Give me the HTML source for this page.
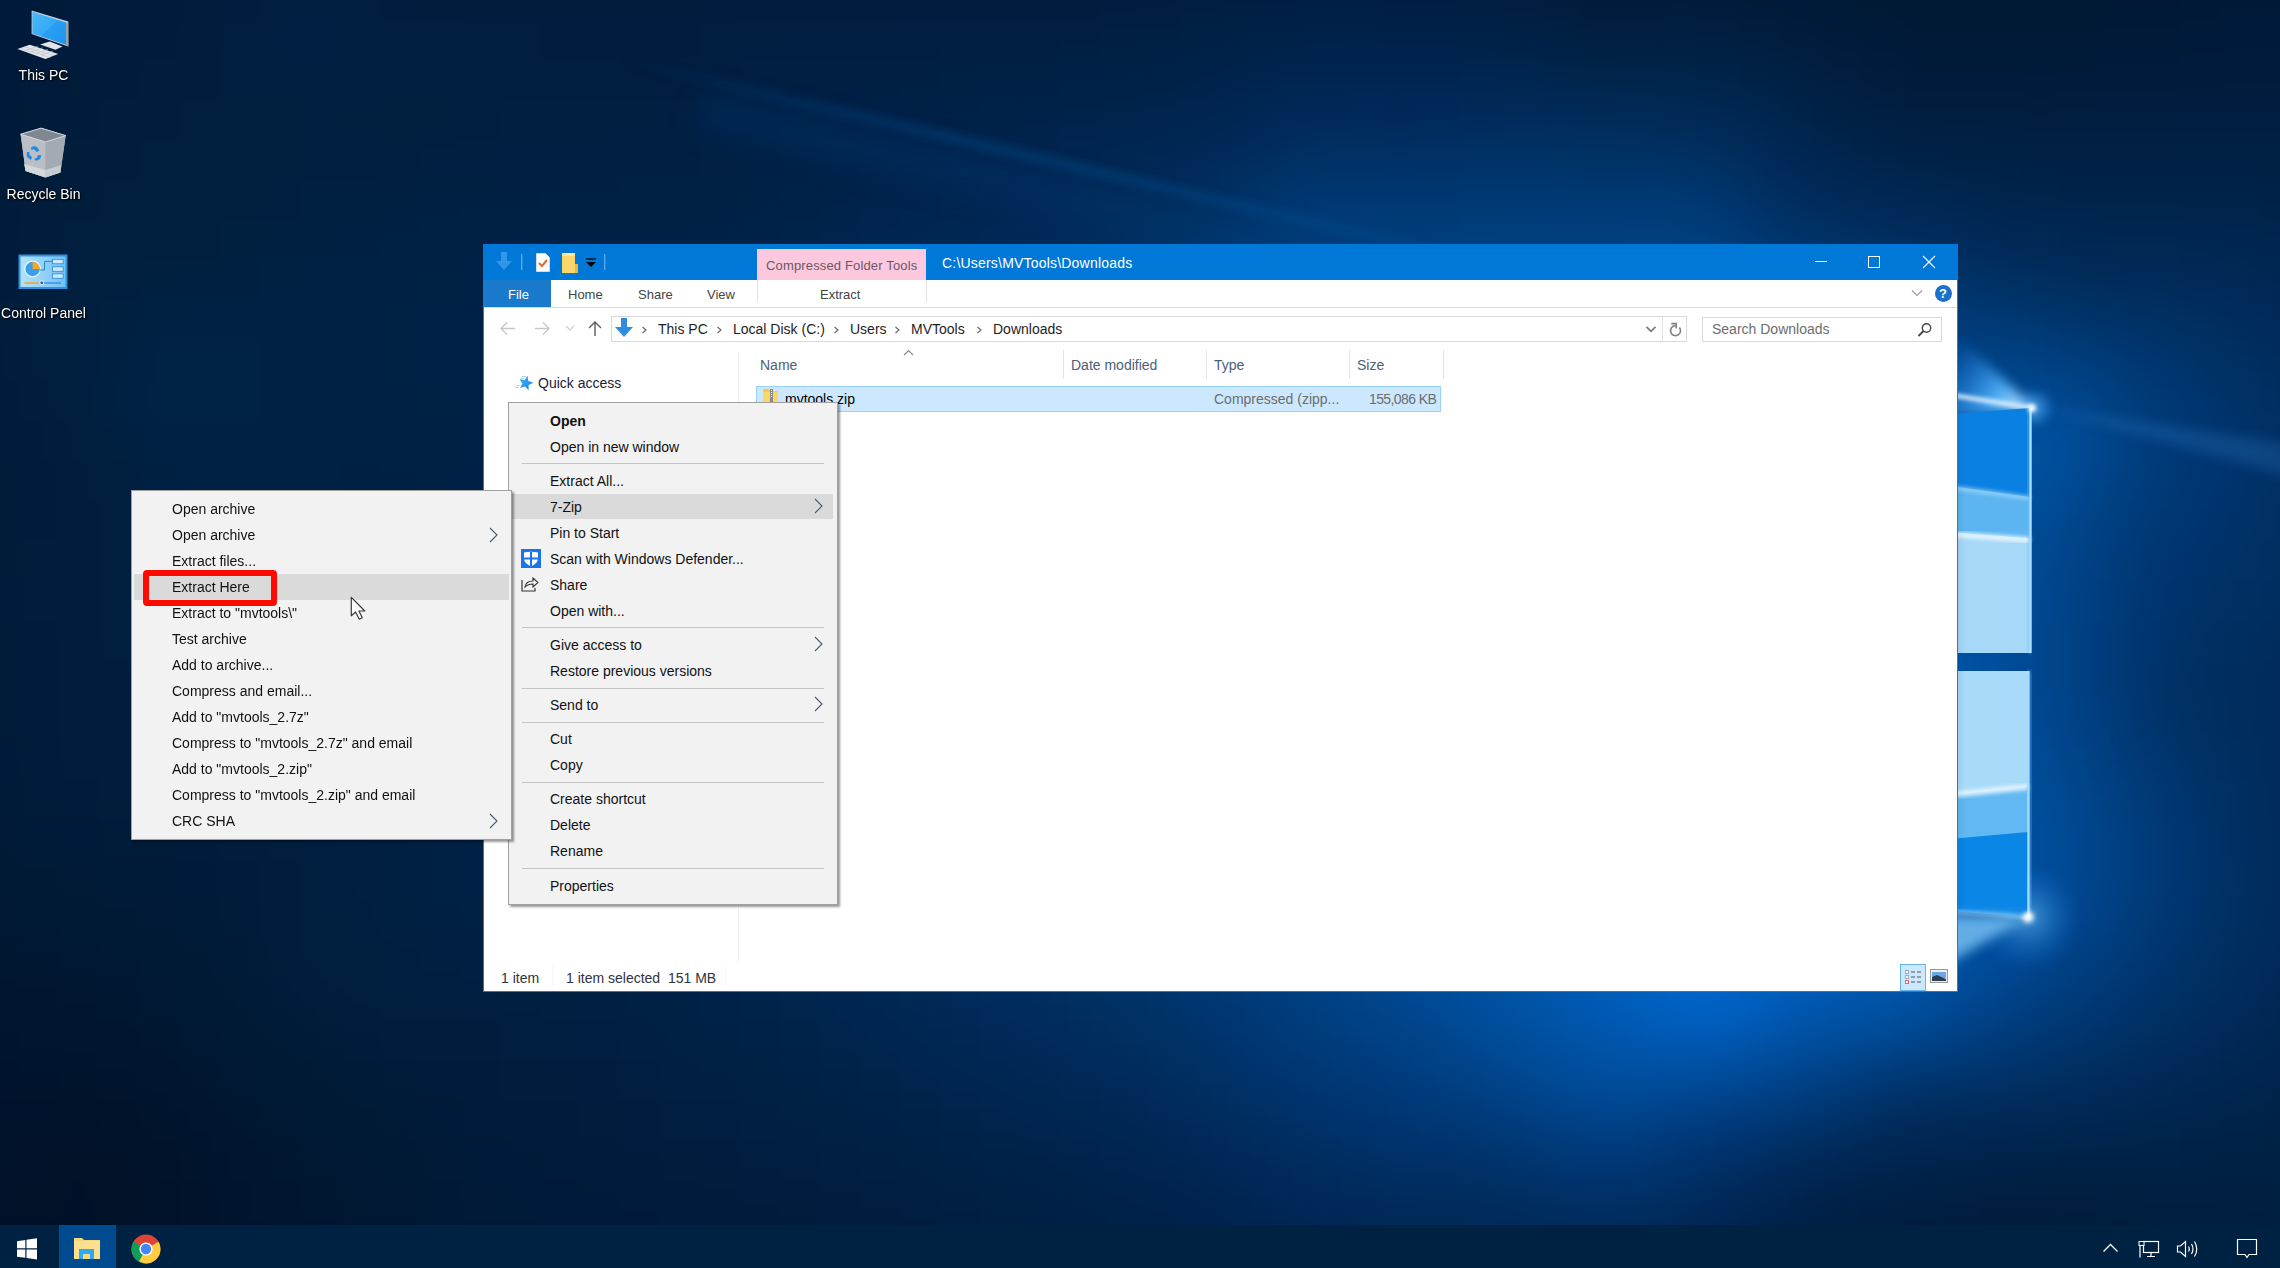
<!DOCTYPE html>
<html><head><meta charset="utf-8">
<style>
*{margin:0;padding:0;box-sizing:border-box}
html,body{width:2280px;height:1268px;overflow:hidden}
body{position:relative;font-family:"Liberation Sans",sans-serif;background:#001f40}
div,span,svg{position:absolute}
.t{white-space:nowrap;font-size:14px;line-height:14px;color:#111}
.s13{font-size:13px;line-height:13px}
#bg{left:0;top:0;width:2280px;height:1268px;overflow:hidden}
.ico-lbl{color:#fff;text-shadow:0 0 2px #000,1px 1px 2px #000;text-align:center}
.menu{background:#f2f2f2;border:1px solid #a0a0a0;box-shadow:2px 2px 2px rgba(0,0,0,.4)}
.sep{height:1px;background:#c5c5c5}
.chev{width:6px;height:6px}
</style></head><body>
<div id="bg">
<div style="left:-60px;top:-60px;width:2400px;height:1400px;filter:blur(24px)"><div style="left:60px;top:60px;width:2280px;height:1268px">
<div style="left:-120px;top:-140px;width:2520px;height:40px;background:linear-gradient(90deg,#001836 0px,#001837 40px,#001837 80px,#001938 120px,#001939 160px,#001939 200px,#001a3a 240px,#001a3b 280px,#001b3b 320px,#001b3c 360px,#001b3c 400px,#001b3c 440px,#001b3c 480px,#001b3c 520px,#001b3b 560px,#001b3b 600px,#001b3b 640px,#001b3b 680px,#001b3a 720px,#001b3a 760px,#001b3a 800px,#001a3a 840px,#001a3a 880px,#001a39 920px,#001a39 960px,#001a39 1000px,#001a39 1040px,#001939 1080px,#001938 1120px,#001938 1160px,#001938 1200px,#001938 1240px,#001938 1280px,#001938 1320px,#001938 1360px,#001938 1400px,#001838 1440px,#001837 1480px,#001836 1520px,#001835 1560px,#001734 1600px,#001733 1640px,#001632 1680px,#001631 1720px,#001630 1760px,#00162f 1800px,#00152f 1840px,#00152e 1880px,#00152e 1920px,#00152d 1960px,#00142d 2000px,#00142d 2040px,#00142d 2080px,#00142d 2120px,#00142d 2160px,#00142d 2200px,#00152e 2240px,#00152e 2280px,#00152f 2320px,#00152f 2360px,#001630 2400px,#001630 2440px,#001630 2480px,#001630 2520px)"></div>
<div style="left:-120px;top:-100px;width:2520px;height:40px;background:linear-gradient(90deg,#001837 0px,#001837 40px,#001938 80px,#001939 120px,#001939 160px,#001a3a 200px,#001a3b 240px,#001b3c 280px,#001b3c 320px,#001c3d 360px,#001c3d 400px,#001c3d 440px,#001c3d 480px,#001c3d 520px,#001c3d 560px,#001c3c 600px,#001c3c 640px,#001c3c 680px,#001b3c 720px,#001b3b 760px,#001b3b 800px,#001b3b 840px,#001b3b 880px,#001b3b 920px,#001b3b 960px,#001b3b 1000px,#001b3b 1040px,#001a3b 1080px,#001a3b 1120px,#001a3a 1160px,#001a3a 1200px,#001a3a 1240px,#001a3b 1280px,#001a3b 1320px,#001a3b 1360px,#001a3b 1400px,#001a3b 1440px,#001a3b 1480px,#001a3a 1520px,#001939 1560px,#001938 1600px,#001936 1640px,#001835 1680px,#001834 1720px,#001733 1760px,#001732 1800px,#001732 1840px,#001731 1880px,#001631 1920px,#001630 1960px,#00162f 2000px,#00152f 2040px,#00152f 2080px,#00152f 2120px,#00152f 2160px,#00162f 2200px,#001630 2240px,#001630 2280px,#001631 2320px,#001632 2360px,#001732 2400px,#001732 2440px,#001732 2480px,#001732 2520px)"></div>
<div style="left:-120px;top:-60px;width:2520px;height:40px;background:linear-gradient(90deg,#001837 0px,#001938 40px,#001938 80px,#001939 120px,#001a3a 160px,#001a3b 200px,#001b3b 240px,#001b3c 280px,#001c3d 320px,#001c3e 360px,#001d3f 400px,#001d3f 440px,#001d3e 480px,#001d3e 520px,#001d3d 560px,#001c3d 600px,#001c3d 640px,#001c3d 680px,#001c3d 720px,#001c3d 760px,#001c3d 800px,#001c3d 840px,#001c3d 880px,#001c3d 920px,#001c3d 960px,#001c3d 1000px,#001c3d 1040px,#001c3d 1080px,#001c3d 1120px,#001b3d 1160px,#001b3d 1200px,#001b3d 1240px,#001c3d 1280px,#001c3e 1320px,#001c3f 1360px,#001c3f 1400px,#001c3f 1440px,#001c3f 1480px,#001c3f 1520px,#001c3e 1560px,#001b3c 1600px,#001b3a 1640px,#001a39 1680px,#001a37 1720px,#001936 1760px,#001936 1800px,#001936 1840px,#001935 1880px,#001834 1920px,#001833 1960px,#001732 2000px,#001731 2040px,#001731 2080px,#001731 2120px,#001731 2160px,#001732 2200px,#001732 2240px,#001733 2280px,#001733 2320px,#001834 2360px,#001835 2400px,#001835 2440px,#001835 2480px,#001835 2520px)"></div>
<div style="left:-120px;top:-20px;width:2520px;height:40px;background:linear-gradient(90deg,#001837 0px,#001938 40px,#001939 80px,#001a39 120px,#001a3a 160px,#001b3b 200px,#001b3c 240px,#001c3d 280px,#001d3e 320px,#001d3f 360px,#001e40 400px,#001e40 440px,#001e3f 480px,#001d3f 520px,#001d3e 560px,#001d3e 600px,#001d3e 640px,#001d3e 680px,#001d3e 720px,#001d3e 760px,#001d3e 800px,#001d3e 840px,#001d3e 880px,#001d3f 920px,#001d3f 960px,#001d3f 1000px,#001d3f 1040px,#001d3f 1080px,#001d3f 1120px,#001d3f 1160px,#001d3f 1200px,#001d40 1240px,#001d41 1280px,#001e42 1320px,#001e43 1360px,#001e44 1400px,#001f44 1440px,#001f44 1480px,#001e44 1520px,#001e43 1560px,#001e42 1600px,#001d40 1640px,#001d3d 1680px,#001c3b 1720px,#001c3b 1760px,#001c3b 1800px,#001c3b 1840px,#001b3a 1880px,#001a38 1920px,#001a36 1960px,#001935 2000px,#001834 2040px,#001834 2080px,#001834 2120px,#001834 2160px,#001834 2200px,#001835 2240px,#001835 2280px,#001936 2320px,#001937 2360px,#001937 2400px,#001937 2440px,#001937 2480px,#001937 2520px)"></div>
<div style="left:-120px;top:20px;width:2520px;height:40px;background:linear-gradient(90deg,#001937 0px,#001938 40px,#001a39 80px,#001a3a 120px,#001b3a 160px,#001b3b 200px,#001c3c 240px,#001c3d 280px,#001d3e 320px,#001e3f 360px,#001e41 400px,#001e41 440px,#001e40 480px,#001e3f 520px,#001e3f 560px,#001e3f 600px,#001e3f 640px,#001d3f 680px,#001d3f 720px,#001d3f 760px,#001d3f 800px,#001e40 840px,#001e40 880px,#001e41 920px,#001e41 960px,#001e41 1000px,#001e42 1040px,#001e42 1080px,#001e42 1120px,#001e42 1160px,#001e43 1200px,#001f43 1240px,#001f44 1280px,#002046 1320px,#002147 1360px,#002149 1400px,#00214a 1440px,#00214a 1480px,#00214a 1520px,#00214a 1560px,#002149 1600px,#002147 1640px,#002044 1680px,#001f40 1720px,#001f41 1760px,#002042 1800px,#001f41 1840px,#001e3f 1880px,#001d3d 1920px,#001c3b 1960px,#001b39 2000px,#001a37 2040px,#001a37 2080px,#001a37 2120px,#001a37 2160px,#001a37 2200px,#001a38 2240px,#001a38 2280px,#001a39 2320px,#001b3a 2360px,#001b3a 2400px,#001b3a 2440px,#001b3a 2480px,#001a3a 2520px)"></div>
<div style="left:-120px;top:60px;width:2520px;height:40px;background:linear-gradient(90deg,#001938 0px,#001a38 40px,#001a39 80px,#001b3a 120px,#001b3b 160px,#001c3b 200px,#001c3c 240px,#001d3d 280px,#001d3e 320px,#001e3f 360px,#001e40 400px,#001f40 440px,#001e40 480px,#001e3f 520px,#001e3f 560px,#001e3f 600px,#001e40 640px,#001e40 680px,#001e40 720px,#001e40 760px,#001e41 800px,#001e41 840px,#001f42 880px,#001f42 920px,#001f43 960px,#001f44 1000px,#001f44 1040px,#002045 1080px,#002046 1120px,#002046 1160px,#002147 1200px,#002147 1240px,#002249 1280px,#00224a 1320px,#00234d 1360px,#00254f 1400px,#002551 1440px,#002552 1480px,#002551 1520px,#002552 1560px,#002651 1600px,#002650 1640px,#00254e 1680px,#00254c 1720px,#00254c 1760px,#00244b 1800px,#00234a 1840px,#002247 1880px,#002043 1920px,#001e40 1960px,#001d3d 2000px,#001c3b 2040px,#001c3a 2080px,#001c3b 2120px,#001b3b 2160px,#001c3b 2200px,#001c3c 2240px,#001c3c 2280px,#001c3d 2320px,#001c3d 2360px,#001c3d 2400px,#001c3d 2440px,#001c3d 2480px,#001c3c 2520px)"></div>
<div style="left:-120px;top:100px;width:2520px;height:40px;background:linear-gradient(90deg,#001938 0px,#001a39 40px,#001a39 80px,#001b3a 120px,#001c3b 160px,#001c3c 200px,#001d3c 240px,#001d3d 280px,#001e3d 320px,#001e3e 360px,#001f3f 400px,#001f40 440px,#001f3f 480px,#001f3f 520px,#001f3f 560px,#001f40 600px,#001f41 640px,#001f41 680px,#001f41 720px,#001f41 760px,#001f42 800px,#001f43 840px,#001f43 880px,#002044 920px,#002045 960px,#002046 1000px,#002147 1040px,#002148 1080px,#002249 1120px,#00224a 1160px,#00234b 1200px,#00244c 1240px,#00244e 1280px,#00254f 1320px,#002753 1360px,#002958 1400px,#002a5a 1440px,#002a5b 1480px,#00295a 1520px,#002a5b 1560px,#002b5c 1600px,#002c5b 1640px,#002c5a 1680px,#002c59 1720px,#002b58 1760px,#002a57 1800px,#002954 1840px,#002650 1880px,#00234b 1920px,#002146 1960px,#001f42 2000px,#001e40 2040px,#001e40 2080px,#001e3f 2120px,#001e3f 2160px,#001e40 2200px,#001e40 2240px,#001e40 2280px,#001e41 2320px,#001e41 2360px,#001e41 2400px,#001e40 2440px,#001e40 2480px,#001d3f 2520px)"></div>
<div style="left:-120px;top:140px;width:2520px;height:40px;background:linear-gradient(90deg,#001a38 0px,#001a39 40px,#001b3a 80px,#001b3a 120px,#001c3b 160px,#001d3c 200px,#001d3c 240px,#001e3d 280px,#001e3d 320px,#001f3e 360px,#001f3f 400px,#001f40 440px,#001f40 480px,#001f40 520px,#001f41 560px,#001f41 600px,#001f42 640px,#001f42 680px,#001f42 720px,#001f43 760px,#001f43 800px,#002044 840px,#002045 880px,#002146 920px,#002148 960px,#002249 1000px,#00224a 1040px,#00234c 1080px,#00244d 1120px,#00254f 1160px,#002651 1200px,#002752 1240px,#002854 1280px,#002956 1320px,#002c5c 1360px,#002f62 1400px,#003166 1440px,#003166 1480px,#003066 1520px,#003167 1560px,#003267 1600px,#003267 1640px,#003367 1680px,#003266 1720px,#003266 1760px,#003164 1800px,#002f60 1840px,#002b5a 1880px,#002753 1920px,#00254e 1960px,#00234a 2000px,#002248 2040px,#002146 2080px,#002145 2120px,#002045 2160px,#002045 2200px,#002045 2240px,#002045 2280px,#002045 2320px,#002045 2360px,#002045 2400px,#002044 2440px,#001f43 2480px,#001f42 2520px)"></div>
<div style="left:-120px;top:180px;width:2520px;height:40px;background:linear-gradient(90deg,#001a38 0px,#001b39 40px,#001b3a 80px,#001c3b 120px,#001d3b 160px,#001d3c 200px,#001e3d 240px,#001e3d 280px,#001f3d 320px,#001f3e 360px,#001f40 400px,#002041 440px,#002041 480px,#002042 520px,#002043 560px,#002043 600px,#002043 640px,#002044 680px,#002044 720px,#002044 760px,#002044 800px,#002045 840px,#002147 880px,#002248 920px,#00224a 960px,#00234c 1000px,#00244e 1040px,#002550 1080px,#002652 1120px,#002754 1160px,#002956 1200px,#002a59 1240px,#002c5c 1280px,#002f61 1320px,#003267 1360px,#00376f 1400px,#003873 1440px,#003873 1480px,#003872 1520px,#003872 1560px,#003973 1600px,#003973 1640px,#003973 1680px,#003973 1720px,#003973 1760px,#003973 1800px,#00366e 1840px,#003165 1880px,#002b5c 1920px,#002a58 1960px,#002855 2000px,#002752 2040px,#00264f 2080px,#00244d 2120px,#00244b 2160px,#00234b 2200px,#00234a 2240px,#00234a 2280px,#00234a 2320px,#00234a 2360px,#002249 2400px,#002248 2440px,#002147 2480px,#002045 2520px)"></div>
<div style="left:-120px;top:220px;width:2520px;height:40px;background:linear-gradient(90deg,#001a38 0px,#001b39 40px,#001b3a 80px,#001c3b 120px,#001d3c 160px,#001e3d 200px,#001e3e 240px,#001f3e 280px,#001f3f 320px,#002040 360px,#002041 400px,#002042 440px,#002043 480px,#002044 520px,#002144 560px,#002145 600px,#002045 640px,#002045 680px,#002045 720px,#002145 760px,#002146 800px,#002147 840px,#002249 880px,#00234b 920px,#00244d 960px,#00254f 1000px,#002651 1040px,#002753 1080px,#002856 1120px,#002a59 1160px,#002c5c 1200px,#002e60 1240px,#003164 1280px,#00346a 1320px,#003871 1360px,#003d7a 1400px,#003f7e 1440px,#003e7d 1480px,#003e7c 1520px,#003e7d 1560px,#003f7d 1600px,#003f7e 1640px,#003f7e 1680px,#003f7e 1720px,#00407f 1760px,#004080 1800px,#003d7c 1840px,#003872 1880px,#00336a 1920px,#003065 1960px,#002f61 2000px,#002d5e 2040px,#002b5a 2080px,#002855 2120px,#002854 2160px,#002752 2200px,#002751 2240px,#002751 2280px,#002650 2320px,#00264f 2360px,#00254e 2400px,#00244c 2440px,#00234b 2480px,#002249 2520px)"></div>
<div style="left:-120px;top:260px;width:2520px;height:40px;background:linear-gradient(90deg,#001a38 0px,#001b39 40px,#001c3a 80px,#001c3b 120px,#001d3d 160px,#001e3e 200px,#001f3f 240px,#002040 280px,#002041 320px,#002041 360px,#002142 400px,#002143 440px,#002144 480px,#002145 520px,#002146 560px,#002147 600px,#002146 640px,#002146 680px,#002146 720px,#002147 760px,#002248 800px,#002249 840px,#00234b 880px,#00244d 920px,#00254f 960px,#002652 1000px,#002854 1040px,#002957 1080px,#002b5a 1120px,#002c5e 1160px,#002f61 1200px,#003166 1240px,#00346b 1280px,#003871 1320px,#003c78 1360px,#00407f 1400px,#004283 1440px,#004284 1480px,#004284 1520px,#004285 1560px,#004386 1600px,#004386 1640px,#004487 1680px,#004487 1720px,#004487 1760px,#004487 1800px,#004284 1840px,#003e7d 1880px,#003a77 1920px,#003772 1960px,#00356e 2000px,#00346b 2040px,#003267 2080px,#003063 2120px,#002e5f 2160px,#002c5a 2200px,#002b59 2240px,#002b59 2280px,#002a57 2320px,#002956 2360px,#002753 2400px,#002651 2440px,#00254e 2480px,#00234c 2520px)"></div>
<div style="left:-120px;top:300px;width:2520px;height:40px;background:linear-gradient(90deg,#001a38 0px,#001b39 40px,#001c3a 80px,#001d3b 120px,#001e3d 160px,#001f3f 200px,#002041 240px,#002142 280px,#002143 320px,#002143 360px,#002144 400px,#002144 440px,#002145 480px,#002146 520px,#002147 560px,#002147 600px,#002147 640px,#002147 680px,#002248 720px,#002248 760px,#002249 800px,#00234b 840px,#00244d 880px,#00254f 920px,#002652 960px,#002854 1000px,#002957 1040px,#002b5a 1080px,#002d5e 1120px,#002f62 1160px,#003166 1200px,#00346b 1240px,#003770 1280px,#003b76 1320px,#003e7d 1360px,#004182 1400px,#004486 1440px,#004589 1480px,#00458a 1520px,#00468b 1560px,#00478c 1600px,#00478d 1640px,#00488e 1680px,#00488f 1720px,#00488f 1760px,#00478e 1800px,#00468b 1840px,#004387 1880px,#004083 1920px,#003e7f 1960px,#003d7c 2000px,#003b79 2040px,#003a76 2080px,#003973 2120px,#00376f 2160px,#00346a 2200px,#003266 2240px,#003063 2280px,#002e5f 2320px,#002c5c 2360px,#002a59 2400px,#002855 2440px,#002652 2480px,#00254f 2520px)"></div>
<div style="left:-120px;top:340px;width:2520px;height:40px;background:linear-gradient(90deg,#001a38 0px,#001b39 40px,#001c3a 80px,#001c3b 120px,#001e3d 160px,#001f3f 200px,#002042 240px,#002244 280px,#002245 320px,#002244 360px,#002144 400px,#002145 440px,#002145 480px,#002146 520px,#002147 560px,#002147 600px,#002247 640px,#002248 680px,#002249 720px,#00234a 760px,#00234b 800px,#00244d 840px,#00254f 880px,#002651 920px,#002854 960px,#002957 1000px,#002b5a 1040px,#002d5e 1080px,#002f62 1120px,#003166 1160px,#00346a 1200px,#00366f 1240px,#003a75 1280px,#003d7a 1320px,#004080 1360px,#004385 1400px,#00458a 1440px,#00478d 1480px,#00488f 1520px,#004991 1560px,#004a92 1600px,#004a93 1640px,#004b94 1680px,#004b95 1720px,#004b95 1760px,#004b94 1800px,#004992 1840px,#004890 1880px,#00468d 1920px,#00448a 1960px,#004388 2000px,#004387 2040px,#004286 2080px,#004285 2120px,#004082 2160px,#003d7c 2200px,#003974 2240px,#00356d 2280px,#003267 2320px,#002f62 2360px,#002c5e 2400px,#002a59 2440px,#002855 2480px,#002652 2520px)"></div>
<div style="left:-120px;top:380px;width:2520px;height:40px;background:linear-gradient(90deg,#001a37 0px,#001b38 40px,#001b39 80px,#001c3a 120px,#001d3c 160px,#001f3f 200px,#002143 240px,#002246 280px,#002245 320px,#002245 360px,#002145 400px,#002145 440px,#002145 480px,#002145 520px,#002146 560px,#002147 600px,#002247 640px,#002248 680px,#002349 720px,#00234a 760px,#00244c 800px,#00254e 840px,#002650 880px,#002753 920px,#002956 960px,#002a59 1000px,#002c5d 1040px,#002e60 1080px,#003065 1120px,#003369 1160px,#00366e 1200px,#003873 1240px,#003b78 1280px,#003e7e 1320px,#004183 1360px,#004488 1400px,#00478c 1440px,#004890 1480px,#004a93 1520px,#004b95 1560px,#004c97 1600px,#004d99 1640px,#004e9a 1680px,#004e9b 1720px,#004e9b 1760px,#004e9b 1800px,#004d9a 1840px,#004c98 1880px,#004b96 1920px,#004a94 1960px,#004993 2000px,#004993 2040px,#004a94 2080px,#004b95 2120px,#004b95 2160px,#00468c 2200px,#003f7f 2240px,#003975 2280px,#00356d 2320px,#003167 2360px,#002e62 2400px,#002c5d 2440px,#002958 2480px,#002754 2520px)"></div>
<div style="left:-120px;top:420px;width:2520px;height:40px;background:linear-gradient(90deg,#001a37 0px,#001b38 40px,#001b39 80px,#001c3a 120px,#001c3a 160px,#001e3d 200px,#002041 240px,#002144 280px,#002144 320px,#002144 360px,#002144 400px,#002144 440px,#002144 480px,#002145 520px,#002145 560px,#002146 600px,#002247 640px,#002248 680px,#002349 720px,#00244b 760px,#00254d 800px,#00264f 840px,#002752 880px,#002855 920px,#002a58 960px,#002c5b 1000px,#002e5f 1040px,#003063 1080px,#003267 1120px,#00346c 1160px,#003771 1200px,#003a76 1240px,#003d7b 1280px,#004080 1320px,#004386 1360px,#00458b 1400px,#00488f 1440px,#004a93 1480px,#004c96 1520px,#004d99 1560px,#004f9c 1600px,#00509e 1640px,#00509f 1680px,#0051a0 1720px,#0051a1 1760px,#0051a1 1800px,#0051a0 1840px,#00509f 1880px,#004f9e 1920px,#004e9d 1960px,#004e9c 2000px,#004e9c 2040px,#004f9d 2080px,#0051a0 2120px,#0053a5 2160px,#004b97 2200px,#004285 2240px,#003b79 2280px,#003671 2320px,#00336b 2360px,#003065 2400px,#002d5f 2440px,#002a5a 2480px,#002855 2520px)"></div>
<div style="left:-120px;top:460px;width:2520px;height:40px;background:linear-gradient(90deg,#001a37 0px,#001b38 40px,#001b38 80px,#001c39 120px,#001c3a 160px,#001d3c 200px,#001f3f 240px,#002042 280px,#002143 320px,#002143 360px,#002143 400px,#002143 440px,#002043 480px,#002043 520px,#002044 560px,#002145 600px,#002146 640px,#002248 680px,#00234a 720px,#00244c 760px,#00254e 800px,#002650 840px,#002853 880px,#002956 920px,#002b59 960px,#002d5d 1000px,#002f61 1040px,#003165 1080px,#003369 1120px,#00366e 1160px,#003873 1200px,#003b78 1240px,#003e7d 1280px,#004183 1320px,#004488 1360px,#00478d 1400px,#004991 1440px,#004b96 1480px,#004d99 1520px,#004f9d 1560px,#0051a0 1600px,#0052a2 1640px,#0053a4 1680px,#0054a5 1720px,#0054a6 1760px,#0054a6 1800px,#0054a6 1840px,#0053a5 1880px,#0053a4 1920px,#0052a3 1960px,#0051a2 2000px,#0051a2 2040px,#0051a2 2080px,#0051a2 2120px,#00509e 2160px,#004991 2200px,#004082 2240px,#003a78 2280px,#003671 2320px,#00336b 2360px,#003065 2400px,#002d60 2440px,#002b5b 2480px,#002856 2520px)"></div>
<div style="left:-120px;top:500px;width:2520px;height:40px;background:linear-gradient(90deg,#001a37 0px,#001b38 40px,#001b38 80px,#001c39 120px,#001c3b 160px,#001d3c 200px,#001e3e 240px,#001f40 280px,#002041 320px,#002042 360px,#002042 400px,#002042 440px,#002042 480px,#002042 520px,#002043 560px,#002044 600px,#002145 640px,#002247 680px,#002349 720px,#00244c 760px,#00254e 800px,#002751 840px,#002854 880px,#002a57 920px,#002b5a 960px,#002d5e 1000px,#002f62 1040px,#003266 1080px,#00346b 1120px,#003770 1160px,#003974 1200px,#003c7a 1240px,#003f7f 1280px,#004284 1320px,#00458a 1360px,#00488f 1400px,#004a94 1440px,#004d98 1480px,#004f9c 1520px,#0051a0 1560px,#0052a3 1600px,#0054a6 1640px,#0055a8 1680px,#0056aa 1720px,#0056ab 1760px,#0057ab 1800px,#0056ab 1840px,#0056ab 1880px,#0055aa 1920px,#0055a8 1960px,#0054a7 2000px,#0053a5 2040px,#0052a3 2080px,#004f9f 2120px,#004b97 2160px,#00458a 2200px,#003d7d 2240px,#003874 2280px,#00346e 2320px,#003269 2360px,#002f64 2400px,#002d5f 2440px,#002b5b 2480px,#002856 2520px)"></div>
<div style="left:-120px;top:540px;width:2520px;height:40px;background:linear-gradient(90deg,#001a37 0px,#001b37 40px,#001b38 80px,#001c39 120px,#001d3b 160px,#001d3c 200px,#001e3e 240px,#001f3f 280px,#001f40 320px,#002041 360px,#002041 400px,#002041 440px,#001f41 480px,#001f41 520px,#001f41 560px,#002042 600px,#002145 640px,#002247 680px,#002349 720px,#00244c 760px,#00254f 800px,#002751 840px,#002854 880px,#002a58 920px,#002c5b 960px,#002e5f 1000px,#003063 1040px,#003267 1080px,#00356c 1120px,#003771 1160px,#003a76 1200px,#003d7b 1240px,#004080 1280px,#004386 1320px,#00458b 1360px,#004890 1400px,#004b95 1440px,#004e9a 1480px,#00509e 1520px,#0052a2 1560px,#0054a6 1600px,#0056a9 1640px,#0057ac 1680px,#0058ae 1720px,#0059af 1760px,#0059b0 1800px,#0059b0 1840px,#0059b0 1880px,#0058ae 1920px,#0057ad 1960px,#0056aa 2000px,#0054a7 2040px,#0051a2 2080px,#004e9c 2120px,#004992 2160px,#004286 2200px,#003b7a 2240px,#003570 2280px,#00326a 2320px,#003066 2360px,#002f62 2400px,#002c5e 2440px,#002a5a 2480px,#002856 2520px)"></div>
<div style="left:-120px;top:580px;width:2520px;height:40px;background:linear-gradient(90deg,#001a36 0px,#001b37 40px,#001b38 80px,#001c3a 120px,#001d3b 160px,#001d3c 200px,#001e3d 240px,#001e3e 280px,#001f3f 320px,#001f40 360px,#001f40 400px,#001f40 440px,#001f40 480px,#001f40 520px,#001f40 560px,#001f42 600px,#002144 640px,#002247 680px,#002349 720px,#00244c 760px,#00264f 800px,#002752 840px,#002955 880px,#002a58 920px,#002c5c 960px,#002e60 1000px,#003064 1040px,#003368 1080px,#00356d 1120px,#003871 1160px,#003a76 1200px,#003d7c 1240px,#004081 1280px,#004387 1320px,#00468c 1360px,#004991 1400px,#004c97 1440px,#004e9c 1480px,#0051a0 1520px,#0053a5 1560px,#0055a9 1600px,#0057ac 1640px,#0059af 1680px,#005ab2 1720px,#005bb3 1760px,#005bb4 1800px,#005bb5 1840px,#005bb4 1880px,#005ab2 1920px,#0059b0 1960px,#0057ad 2000px,#0054a8 2040px,#0051a2 2080px,#004d9a 2120px,#004790 2160px,#004184 2200px,#003a78 2240px,#00346e 2280px,#003167 2320px,#002f63 2360px,#002e60 2400px,#002c5c 2440px,#002a59 2480px,#002855 2520px)"></div>
<div style="left:-120px;top:620px;width:2520px;height:40px;background:linear-gradient(90deg,#001a36 0px,#001a37 40px,#001b38 80px,#001c39 120px,#001c3b 160px,#001d3c 200px,#001e3d 240px,#001e3e 280px,#001e3f 320px,#001f3f 360px,#001f40 400px,#001f40 440px,#001f40 480px,#001f40 520px,#001f40 560px,#002042 600px,#002144 640px,#002247 680px,#002349 720px,#00244c 760px,#00264f 800px,#002752 840px,#002955 880px,#002a58 920px,#002c5c 960px,#002e60 1000px,#003064 1040px,#003368 1080px,#00356d 1120px,#003872 1160px,#003a77 1200px,#003d7c 1240px,#004081 1280px,#004387 1320px,#00468d 1360px,#004992 1400px,#004c98 1440px,#004f9d 1480px,#0052a2 1520px,#0054a7 1560px,#0056ab 1600px,#0059af 1640px,#005ab3 1680px,#005cb5 1720px,#005db7 1760px,#005db8 1800px,#005db9 1840px,#005db8 1880px,#005cb6 1920px,#005ab3 1960px,#0058af 2000px,#0055aa 2040px,#0051a3 2080px,#004d9a 2120px,#00478f 2160px,#004083 2200px,#003976 2240px,#00336b 2280px,#002f63 2320px,#002e60 2360px,#002c5d 2400px,#002b5a 2440px,#002957 2480px,#002754 2520px)"></div>
<div style="left:-120px;top:660px;width:2520px;height:40px;background:linear-gradient(90deg,#001a36 0px,#001a37 40px,#001b38 80px,#001c39 120px,#001c3b 160px,#001d3c 200px,#001d3d 240px,#001e3d 280px,#001e3e 320px,#001e3f 360px,#001f3f 400px,#001f40 440px,#001f40 480px,#001f41 520px,#001f41 560px,#002043 600px,#002145 640px,#002247 680px,#002349 720px,#00244c 760px,#00264f 800px,#002752 840px,#002955 880px,#002a58 920px,#002c5c 960px,#002e60 1000px,#003064 1040px,#003368 1080px,#00356d 1120px,#003871 1160px,#003a77 1200px,#003d7c 1240px,#004081 1280px,#004387 1320px,#00468d 1360px,#004992 1400px,#004c98 1440px,#004f9e 1480px,#0052a3 1520px,#0055a8 1560px,#0057ad 1600px,#005ab1 1640px,#005cb5 1680px,#005db8 1720px,#005ebb 1760px,#005fbc 1800px,#005fbc 1840px,#005fbc 1880px,#005eba 1920px,#005cb6 1960px,#0059b2 2000px,#0056ac 2040px,#0052a4 2080px,#004d9b 2120px,#00478f 2160px,#004083 2200px,#003975 2240px,#003268 2280px,#002e61 2320px,#002d5e 2360px,#002b5c 2400px,#002a59 2440px,#002856 2480px,#002753 2520px)"></div>
<div style="left:-120px;top:700px;width:2520px;height:40px;background:linear-gradient(90deg,#001936 0px,#001a37 40px,#001b38 80px,#001c39 120px,#001c3a 160px,#001d3b 200px,#001d3c 240px,#001e3d 280px,#001e3d 320px,#001e3e 360px,#001e3f 400px,#001f40 440px,#001f40 480px,#001f41 520px,#002042 560px,#002044 600px,#002145 640px,#002247 680px,#00234a 720px,#00244c 760px,#00254f 800px,#002751 840px,#002854 880px,#002a58 920px,#002c5b 960px,#002e5f 1000px,#003063 1040px,#003267 1080px,#00356c 1120px,#003771 1160px,#003a76 1200px,#003d7b 1240px,#004081 1280px,#004386 1320px,#00468c 1360px,#004992 1400px,#004c98 1440px,#004f9e 1480px,#0052a4 1520px,#0055a9 1560px,#0058ae 1600px,#005bb3 1640px,#005db8 1680px,#005fbb 1720px,#0060be 1760px,#0061c0 1800px,#0061c0 1840px,#0060bf 1880px,#005fbd 1920px,#005db9 1960px,#005bb4 2000px,#0057ae 2040px,#0053a6 2080px,#004e9d 2120px,#004891 2160px,#004184 2200px,#003a76 2240px,#003268 2280px,#002f62 2320px,#002d5e 2360px,#002b5b 2400px,#002958 2440px,#002855 2480px,#002652 2520px)"></div>
<div style="left:-120px;top:740px;width:2520px;height:40px;background:linear-gradient(90deg,#001935 0px,#001a36 40px,#001b37 80px,#001b39 120px,#001c3a 160px,#001d3b 200px,#001d3c 240px,#001d3c 280px,#001d3d 320px,#001e3e 360px,#001e3e 400px,#001f3f 440px,#001f41 480px,#002042 520px,#002043 560px,#002144 600px,#002146 640px,#002248 680px,#002349 720px,#00244c 760px,#00254e 800px,#002751 840px,#002854 880px,#002a57 920px,#002b5a 960px,#002d5e 1000px,#002f62 1040px,#003266 1080px,#00346b 1120px,#003770 1160px,#003975 1200px,#003c7a 1240px,#003f7f 1280px,#004285 1320px,#00458b 1360px,#004891 1400px,#004c97 1440px,#004f9d 1480px,#0052a3 1520px,#0055a9 1560px,#0059af 1600px,#005bb5 1640px,#005eba 1680px,#0060be 1720px,#0061c1 1760px,#0062c3 1800px,#0063c3 1840px,#0062c2 1880px,#0061c0 1920px,#005fbc 1960px,#005cb7 2000px,#0058b1 2040px,#0054a9 2080px,#004f9f 2120px,#004a94 2160px,#004388 2200px,#003c7b 2240px,#00366f 2280px,#003166 2320px,#002d60 2360px,#002b5b 2400px,#002958 2440px,#002754 2480px,#002651 2520px)"></div>
<div style="left:-120px;top:780px;width:2520px;height:40px;background:linear-gradient(90deg,#001834 0px,#001935 40px,#001a37 80px,#001b38 120px,#001c3a 160px,#001c3b 200px,#001d3b 240px,#001d3b 280px,#001d3c 320px,#001d3d 360px,#001e3e 400px,#001f3f 440px,#001f41 480px,#002042 520px,#002043 560px,#002145 600px,#002146 640px,#002247 680px,#002349 720px,#00244b 760px,#00254d 800px,#002650 840px,#002853 880px,#002956 920px,#002b59 960px,#002d5d 1000px,#002f61 1040px,#003165 1080px,#003369 1120px,#00366e 1160px,#003873 1200px,#003b78 1240px,#003e7e 1280px,#004183 1320px,#004489 1360px,#00478f 1400px,#004b96 1440px,#004e9c 1480px,#0052a3 1520px,#0055a9 1560px,#0059af 1600px,#005cb5 1640px,#005ebb 1680px,#0061c0 1720px,#0063c3 1760px,#0064c6 1800px,#0064c6 1840px,#0063c5 1880px,#0062c3 1920px,#0060bf 1960px,#005db9 2000px,#005ab3 2040px,#0055ab 2080px,#0051a2 2120px,#004c98 2160px,#00468d 2200px,#003f80 2240px,#003873 2280px,#003269 2320px,#002e61 2360px,#002b5c 2400px,#002958 2440px,#002754 2480px,#002551 2520px)"></div>
<div style="left:-120px;top:820px;width:2520px;height:40px;background:linear-gradient(90deg,#001833 0px,#001934 40px,#001935 80px,#001a37 120px,#001b38 160px,#001b39 200px,#001c39 240px,#001c3a 280px,#001c3b 320px,#001d3c 360px,#001e3d 400px,#001e3f 440px,#001f41 480px,#002042 520px,#002044 560px,#002145 600px,#002146 640px,#002247 680px,#002249 720px,#00234a 760px,#00244c 800px,#00254f 840px,#002752 880px,#002855 920px,#002a58 960px,#002c5b 1000px,#002e5f 1040px,#003063 1080px,#003267 1120px,#00346c 1160px,#003771 1200px,#003a76 1240px,#003c7b 1280px,#004081 1320px,#004387 1360px,#00468d 1400px,#004a94 1440px,#004d9a 1480px,#0051a1 1520px,#0054a8 1560px,#0058af 1600px,#005cb5 1640px,#005fbb 1680px,#0061c1 1720px,#0064c5 1760px,#0065c8 1800px,#0065c9 1840px,#0065c8 1880px,#0063c5 1920px,#0061c0 1960px,#005ebb 2000px,#005ab4 2040px,#0056ad 2080px,#0052a5 2120px,#004d9b 2160px,#004790 2200px,#004082 2240px,#003976 2280px,#00336b 2320px,#002e63 2360px,#002b5c 2400px,#002957 2440px,#002753 2480px,#002550 2520px)"></div>
<div style="left:-120px;top:860px;width:2520px;height:40px;background:linear-gradient(90deg,#001732 0px,#001833 40px,#001834 80px,#001935 120px,#001a36 160px,#001a37 200px,#001b38 240px,#001b38 280px,#001b39 320px,#001c3a 360px,#001d3c 400px,#001e3f 440px,#001f41 480px,#002042 520px,#002044 560px,#002145 600px,#002145 640px,#002146 680px,#002248 720px,#002349 760px,#00244b 800px,#00254d 840px,#002650 880px,#002753 920px,#002956 960px,#002b59 1000px,#002d5d 1040px,#002f61 1080px,#003165 1120px,#003369 1160px,#00356e 1200px,#003873 1240px,#003b78 1280px,#003e7e 1320px,#004184 1360px,#00448a 1400px,#004891 1440px,#004c97 1480px,#004f9e 1520px,#0053a5 1560px,#0057ad 1600px,#005bb4 1640px,#005ebb 1680px,#0061c1 1720px,#0064c6 1760px,#0066ca 1800px,#0066cb 1840px,#0065c9 1880px,#0063c6 1920px,#0061c1 1960px,#005ebb 2000px,#005ab4 2040px,#0056ac 2080px,#0052a5 2120px,#004e9d 2160px,#004790 2200px,#004082 2240px,#003976 2280px,#00336b 2320px,#002f63 2360px,#002b5c 2400px,#002957 2440px,#002653 2480px,#00254f 2520px)"></div>
<div style="left:-120px;top:900px;width:2520px;height:40px;background:linear-gradient(90deg,#001631 0px,#001732 40px,#001733 80px,#001833 120px,#001934 160px,#001935 200px,#001a36 240px,#001a37 280px,#001b38 320px,#001c39 360px,#001d3c 400px,#001e3e 440px,#001f40 480px,#002042 520px,#002043 560px,#002044 600px,#002044 640px,#002145 680px,#002146 720px,#002248 760px,#00234a 800px,#00244c 840px,#00254e 880px,#002651 920px,#002854 960px,#002a57 1000px,#002b5b 1040px,#002d5e 1080px,#002f62 1120px,#003166 1160px,#00336a 1200px,#00366f 1240px,#003974 1280px,#003c7a 1320px,#003f80 1360px,#004286 1400px,#00468d 1440px,#004994 1480px,#004d9b 1520px,#0051a2 1560px,#0055a9 1600px,#0059b1 1640px,#005db9 1680px,#0061c0 1720px,#0064c6 1760px,#0066cb 1800px,#0067cc 1840px,#0065c9 1880px,#0063c4 1920px,#0060bf 1960px,#005db9 2000px,#0059b1 2040px,#0054a9 2080px,#004fa0 2120px,#004a97 2160px,#00448c 2200px,#003e7f 2240px,#003873 2280px,#003269 2320px,#002e61 2360px,#002b5b 2400px,#002856 2440px,#002651 2480px,#00244e 2520px)"></div>
<div style="left:-120px;top:940px;width:2520px;height:40px;background:linear-gradient(90deg,#001530 0px,#001630 40px,#001631 80px,#001731 120px,#001732 160px,#001833 200px,#001834 240px,#001935 280px,#001a36 320px,#001b38 360px,#001d3b 400px,#001f3e 440px,#001f3f 480px,#001f40 520px,#001f41 560px,#001f42 600px,#001f43 640px,#002043 680px,#002044 720px,#002146 760px,#002248 800px,#00234a 840px,#00244c 880px,#00254f 920px,#002751 960px,#002854 1000px,#002a58 1040px,#002c5b 1080px,#002d5f 1120px,#002f62 1160px,#003166 1200px,#00346b 1240px,#003670 1280px,#003975 1320px,#003c7b 1360px,#003f82 1400px,#004388 1440px,#00468f 1480px,#004a95 1520px,#004e9d 1560px,#0053a4 1600px,#0057ac 1640px,#005bb4 1680px,#005fbc 1720px,#0062c4 1760px,#0066cb 1800px,#0066cc 1840px,#0063c7 1880px,#0060c0 1920px,#005dba 1960px,#005ab4 2000px,#0056ac 2040px,#0050a1 2080px,#004a97 2120px,#00458d 2160px,#004083 2200px,#003a78 2240px,#00356e 2280px,#003065 2320px,#002d5e 2360px,#002a58 2400px,#002754 2440px,#002550 2480px,#00244c 2520px)"></div>
<div style="left:-120px;top:980px;width:2520px;height:40px;background:linear-gradient(90deg,#00152e 0px,#00152f 40px,#00152f 80px,#001630 120px,#001630 160px,#001631 200px,#001732 240px,#001833 280px,#001935 320px,#001a37 360px,#001c39 400px,#001d3b 440px,#001e3d 480px,#001e3e 520px,#001e3f 560px,#001e40 600px,#001f41 640px,#001f41 680px,#001f42 720px,#002044 760px,#002146 800px,#002248 840px,#00234a 880px,#00244c 920px,#00254f 960px,#002751 1000px,#002854 1040px,#002a58 1080px,#002b5b 1120px,#002d5e 1160px,#002f61 1200px,#003165 1240px,#00336a 1280px,#003670 1320px,#003976 1360px,#003c7c 1400px,#004082 1440px,#004388 1480px,#00468f 1520px,#004a96 1560px,#004f9d 1600px,#0053a5 1640px,#0057ad 1680px,#005bb5 1720px,#005fbd 1760px,#0063c6 1800px,#0065ca 1840px,#005fbe 1880px,#005ab4 1920px,#0056ae 1960px,#0055ab 2000px,#0051a3 2040px,#004995 2080px,#00438a 2120px,#003e80 2160px,#003a78 2200px,#00356f 2240px,#003167 2280px,#002e60 2320px,#002b5a 2360px,#002855 2400px,#002651 2440px,#00244d 2480px,#00234a 2520px)"></div>
<div style="left:-120px;top:1020px;width:2520px;height:40px;background:linear-gradient(90deg,#00142d 0px,#00142d 40px,#00142e 80px,#00142e 120px,#00152e 160px,#00152e 200px,#00162f 240px,#001731 280px,#001832 320px,#001935 360px,#001a37 400px,#001c39 440px,#001c3a 480px,#001d3c 520px,#001d3d 560px,#001d3e 600px,#001e3f 640px,#001e40 680px,#001e41 720px,#001f42 760px,#002044 800px,#002146 840px,#002247 880px,#002349 920px,#00244c 960px,#00254e 1000px,#002651 1040px,#002854 1080px,#002957 1120px,#002a59 1160px,#002c5c 1200px,#002e5f 1240px,#003064 1280px,#003269 1320px,#00356f 1360px,#003976 1400px,#003c7c 1440px,#003e81 1480px,#004186 1520px,#00458d 1560px,#004994 1600px,#004e9b 1640px,#0051a3 1680px,#0055aa 1720px,#0057b0 1760px,#005ab5 1800px,#0059b5 1840px,#0054ab 1880px,#004fa1 1920px,#004b99 1960px,#004993 2000px,#00458c 2040px,#003f82 2080px,#003b79 2120px,#003772 2160px,#00346b 2200px,#003065 2240px,#002d5f 2280px,#002b59 2320px,#002855 2360px,#002651 2400px,#00254e 2440px,#00234b 2480px,#002248 2520px)"></div>
<div style="left:-120px;top:1060px;width:2520px;height:40px;background:linear-gradient(90deg,#00132c 0px,#00132c 40px,#00132c 80px,#00132c 120px,#00132c 160px,#00142c 200px,#00142d 240px,#00152e 280px,#001730 320px,#001832 360px,#001934 400px,#001a36 440px,#001b38 480px,#001c39 520px,#001c3b 560px,#001c3c 600px,#001d3d 640px,#001d3e 680px,#001d3f 720px,#001e40 760px,#001f42 800px,#001f43 840px,#002045 880px,#002147 920px,#002248 960px,#00234a 1000px,#00244d 1040px,#00254f 1080px,#002652 1120px,#002854 1160px,#002956 1200px,#002a59 1240px,#002c5d 1280px,#002f63 1320px,#003168 1360px,#00346e 1400px,#003773 1440px,#003978 1480px,#003b7c 1520px,#003f81 1560px,#004287 1600px,#00468e 1640px,#004a96 1680px,#004d9d 1720px,#004d9e 1760px,#004c9c 1800px,#004a98 1840px,#004691 1880px,#004289 1920px,#003e7f 1960px,#003875 2000px,#00356e 2040px,#00336b 2080px,#003167 2120px,#002f62 2160px,#002d5e 2200px,#002b5a 2240px,#002956 2280px,#002753 2320px,#00264f 2360px,#00244d 2400px,#00234a 2440px,#002248 2480px,#002146 2520px)"></div>
<div style="left:-120px;top:1100px;width:2520px;height:40px;background:linear-gradient(90deg,#00122b 0px,#00122b 40px,#00122b 80px,#00122a 120px,#00122a 160px,#001229 200px,#00132a 240px,#00142c 280px,#00152e 320px,#001730 360px,#001832 400px,#001934 440px,#001a36 480px,#001a37 520px,#001b39 560px,#001c3a 600px,#001c3c 640px,#001c3d 680px,#001d3e 720px,#001d3f 760px,#001e40 800px,#001e41 840px,#001f42 880px,#002044 920px,#002045 960px,#002147 1000px,#002248 1040px,#00234b 1080px,#00244d 1120px,#00254e 1160px,#002650 1200px,#002753 1240px,#002957 1280px,#002b5b 1320px,#002d60 1360px,#002f65 1400px,#00326a 1440px,#00336e 1480px,#003572 1520px,#003875 1560px,#003a79 1600px,#003d7e 1640px,#004185 1680px,#00438a 1720px,#004288 1760px,#003e82 1800px,#003b7d 1840px,#003977 1880px,#003570 1920px,#003167 1960px,#002c5d 2000px,#002a58 2040px,#002958 2080px,#002856 2120px,#002854 2160px,#002752 2200px,#002650 2240px,#00254e 2280px,#00244c 2320px,#00234a 2360px,#002248 2400px,#002247 2440px,#002145 2480px,#002043 2520px)"></div>
<div style="left:-120px;top:1140px;width:2520px;height:40px;background:linear-gradient(90deg,#00112a 0px,#00112a 40px,#00112a 80px,#00112a 120px,#001129 160px,#001127 200px,#001128 240px,#00132a 280px,#00142c 320px,#00152e 360px,#001730 400px,#001832 440px,#001834 480px,#001935 520px,#001a37 560px,#001b39 600px,#001b3a 640px,#001b3b 680px,#001c3c 720px,#001c3d 760px,#001d3e 800px,#001d3f 840px,#001e40 880px,#001e41 920px,#001f42 960px,#001f43 1000px,#002044 1040px,#002146 1080px,#002248 1120px,#00224a 1160px,#00234c 1200px,#00244e 1240px,#002551 1280px,#002754 1320px,#002959 1360px,#002b5d 1400px,#002d61 1440px,#002e64 1480px,#003067 1520px,#003168 1560px,#003269 1600px,#00346d 1640px,#003773 1680px,#003876 1720px,#003774 1760px,#00336e 1800px,#003068 1840px,#002d62 1880px,#002a59 1920px,#002755 1960px,#002550 2000px,#00244d 2040px,#00234b 2080px,#002249 2120px,#002247 2160px,#002247 2200px,#002247 2240px,#002247 2280px,#002146 2320px,#002144 2360px,#002144 2400px,#002044 2440px,#001f42 2480px,#001f41 2520px)"></div>
<div style="left:-120px;top:1180px;width:2520px;height:40px;background:linear-gradient(90deg,#001129 0px,#00112a 40px,#00112a 80px,#001129 120px,#001128 160px,#001027 200px,#001128 240px,#001229 280px,#00132b 320px,#00142d 360px,#00162f 400px,#001731 440px,#001832 480px,#001834 520px,#001936 560px,#001a38 600px,#001a39 640px,#001b3a 680px,#001b3a 720px,#001b3b 760px,#001c3c 800px,#001c3d 840px,#001c3e 880px,#001d3e 920px,#001d3f 960px,#001e40 1000px,#001e41 1040px,#001f43 1080px,#002045 1120px,#002046 1160px,#002148 1200px,#00224a 1240px,#00224c 1280px,#00234e 1320px,#002552 1360px,#002756 1400px,#002959 1440px,#002a5b 1480px,#002b5d 1520px,#002b5d 1560px,#002c5d 1600px,#002d5f 1640px,#002f64 1680px,#003066 1720px,#002f64 1760px,#002c60 1800px,#00295a 1840px,#002653 1880px,#00224b 1920px,#002148 1960px,#002046 2000px,#001f44 2040px,#001f42 2080px,#001e40 2120px,#001e3f 2160px,#001e3f 2200px,#001f40 2240px,#001f41 2280px,#001f41 2320px,#001f41 2360px,#002042 2400px,#001f41 2440px,#001e40 2480px,#001d3e 2520px)"></div>
<div style="left:-120px;top:1220px;width:2520px;height:40px;background:linear-gradient(90deg,#001029 0px,#001029 40px,#001029 80px,#001029 120px,#001028 160px,#001028 200px,#001128 240px,#001229 280px,#00132b 320px,#00142c 360px,#00152e 400px,#001630 440px,#001731 480px,#001733 520px,#001835 560px,#001937 600px,#001937 640px,#001a38 680px,#001a39 720px,#001a39 760px,#001b3a 800px,#001b3b 840px,#001b3b 880px,#001c3c 920px,#001c3d 960px,#001c3d 1000px,#001d3e 1040px,#001d40 1080px,#001e41 1120px,#001e43 1160px,#001f44 1200px,#002046 1240px,#002048 1280px,#00214a 1320px,#00224d 1360px,#00244f 1400px,#002552 1440px,#002653 1480px,#002755 1520px,#002755 1560px,#002855 1600px,#002857 1640px,#002958 1680px,#002959 1720px,#002857 1760px,#002654 1800px,#00244f 1840px,#002149 1880px,#001f44 1920px,#001d41 1960px,#001c3f 2000px,#001c3d 2040px,#001b3c 2080px,#001b3b 2120px,#001b3a 2160px,#001c3a 2200px,#001c3b 2240px,#001d3c 2280px,#001d3d 2320px,#001e3e 2360px,#001f40 2400px,#001e3f 2440px,#001d3d 2480px,#001c3c 2520px)"></div>
<div style="left:-120px;top:1260px;width:2520px;height:40px;background:linear-gradient(90deg,#001028 0px,#001028 40px,#001028 80px,#001028 120px,#001028 160px,#001028 200px,#001128 240px,#001129 280px,#00122a 320px,#00132b 360px,#00142d 400px,#00152e 440px,#001630 480px,#001732 520px,#001733 560px,#001835 600px,#001836 640px,#001936 680px,#001937 720px,#001938 760px,#001938 800px,#001a39 840px,#001a39 880px,#001a3a 920px,#001b3a 960px,#001b3b 1000px,#001b3c 1040px,#001c3d 1080px,#001c3e 1120px,#001d40 1160px,#001d41 1200px,#001e42 1240px,#001e44 1280px,#001f46 1320px,#002048 1360px,#00214a 1400px,#00224c 1440px,#00234d 1480px,#00234e 1520px,#00234e 1560px,#00244e 1600px,#00244f 1640px,#00244f 1680px,#00244f 1720px,#00234d 1760px,#00224b 1800px,#002047 1840px,#001e42 1880px,#001c3f 1920px,#001b3c 1960px,#001a39 2000px,#001938 2040px,#001937 2080px,#001936 2120px,#001936 2160px,#001a36 2200px,#001a37 2240px,#001b38 2280px,#001b39 2320px,#001c3b 2360px,#001c3b 2400px,#001c3b 2440px,#001c3a 2480px,#001b39 2520px)"></div>
<div style="left:-120px;top:1300px;width:2520px;height:40px;background:linear-gradient(90deg,#000f27 0px,#000f27 40px,#001028 80px,#001028 120px,#001028 160px,#001028 200px,#001028 240px,#001129 280px,#00122a 320px,#00122b 360px,#00132c 400px,#00142d 440px,#00152f 480px,#001630 520px,#001632 560px,#001733 600px,#001734 640px,#001834 680px,#001835 720px,#001836 760px,#001836 800px,#001937 840px,#001937 880px,#001938 920px,#001938 960px,#001a39 1000px,#001a3a 1040px,#001a3b 1080px,#001b3c 1120px,#001b3d 1160px,#001c3e 1200px,#001c3f 1240px,#001d40 1280px,#001d42 1320px,#001e43 1360px,#001f45 1400px,#001f46 1440px,#002047 1480px,#002048 1520px,#002048 1560px,#002148 1600px,#002148 1640px,#002048 1680px,#002047 1720px,#001f46 1760px,#001e43 1800px,#001c40 1840px,#001b3d 1880px,#001a3a 1920px,#001837 1960px,#001835 2000px,#001734 2040px,#001733 2080px,#001733 2120px,#001733 2160px,#001833 2200px,#001834 2240px,#001935 2280px,#001a36 2320px,#001a37 2360px,#001a38 2400px,#001a38 2440px,#001a37 2480px,#001a37 2520px)"></div>
<div style="left:-120px;top:1340px;width:2520px;height:40px;background:linear-gradient(90deg,#000f27 0px,#000f27 40px,#000f27 80px,#000f27 120px,#001027 160px,#001027 200px,#001028 240px,#001128 280px,#001129 320px,#00122a 360px,#00132b 400px,#00132c 440px,#00142e 480px,#00152f 520px,#001530 560px,#001631 600px,#001632 640px,#001733 680px,#001733 720px,#001734 760px,#001734 800px,#001835 840px,#001835 880px,#001836 920px,#001836 960px,#001937 1000px,#001938 1040px,#001938 1080px,#001939 1120px,#001a3a 1160px,#001a3b 1200px,#001a3c 1240px,#001b3d 1280px,#001b3e 1320px,#001c3f 1360px,#001c41 1400px,#001d41 1440px,#001d42 1480px,#001d43 1520px,#001e43 1560px,#001e43 1600px,#001e42 1640px,#001d42 1680px,#001d41 1720px,#001c3f 1760px,#001b3d 1800px,#001a3b 1840px,#001938 1880px,#001836 1920px,#001734 1960px,#001632 2000px,#001631 2040px,#001630 2080px,#001630 2120px,#001630 2160px,#001630 2200px,#001731 2240px,#001732 2280px,#001833 2320px,#001834 2360px,#001934 2400px,#001934 2440px,#001834 2480px,#001834 2520px)"></div>
</div></div>
<svg style="left:0;top:0" width="2280" height="260" viewBox="0 0 2280 260">
  <defs><filter id="sb4" x="-10%" y="-50%" width="120%" height="200%"><feGaussianBlur stdDeviation="4"/></filter>
  <filter id="sb14" x="-10%" y="-50%" width="120%" height="200%"><feGaussianBlur stdDeviation="14"/></filter></defs>
  <linearGradient id="stg" x1="620" y1="60" x2="950" y2="138" gradientUnits="userSpaceOnUse"><stop offset="0" stop-color="#0a4a8c" stop-opacity="0"/><stop offset="1" stop-color="#0a4a8c" stop-opacity=".5"/></linearGradient>
  <path d="M620 60L1420 248" stroke="url(#stg)" stroke-width="9" filter="url(#sb4)"/>
  <path d="M700 110L1420 280" stroke="#04396f" stroke-width="40" opacity=".35" filter="url(#sb14)"/>
</svg>
<!-- logo panes -->
<svg style="left:1940px;top:300px" width="340" height="720" viewBox="1940 300 340 720">
  <defs>
    <radialGradient id="g1" cx="2032" cy="408" r="48" gradientUnits="userSpaceOnUse"><stop offset="0" stop-color="#bfe6ff" stop-opacity=".95"/><stop offset=".25" stop-color="#3aa0f0" stop-opacity=".7"/><stop offset="1" stop-color="#0a6fd8" stop-opacity="0"/></radialGradient>
    <radialGradient id="g2" cx="2028" cy="917" r="55" gradientUnits="userSpaceOnUse"><stop offset="0" stop-color="#e6f6ff" stop-opacity="1"/><stop offset=".2" stop-color="#5ab4f4" stop-opacity=".8"/><stop offset="1" stop-color="#0a6fd8" stop-opacity="0"/></radialGradient>
    <filter id="bl2" x="-50%" y="-50%" width="200%" height="200%"><feGaussianBlur stdDeviation="2"/></filter>
    <filter id="bl6" x="-50%" y="-50%" width="200%" height="200%"><feGaussianBlur stdDeviation="6"/></filter>
    <linearGradient id="edgeL" x1="0" x2="1" y1="0" y2="0"><stop offset="0" stop-color="#000" stop-opacity=".12"/><stop offset=".2" stop-color="#000" stop-opacity="0"/></linearGradient>
  </defs>
  <defs>
    <linearGradient id="wedge" x1="2032" y1="408" x2="1945" y2="350" gradientUnits="userSpaceOnUse"><stop offset="0" stop-color="#c8ecff"/><stop offset=".35" stop-color="#4aaaf4"/><stop offset="1" stop-color="#0a6cd4" stop-opacity="0"/></linearGradient>
  </defs>
  <path d="M2036 410L1940 320L1940 416z" fill="url(#wedge)" filter="url(#bl6)"/>
  <path d="M2034 406L2300 445L2300 480z" fill="#3a8ee0" opacity=".22" filter="url(#bl6)"/>
  <circle cx="2034" cy="408" r="14" fill="#4fb0ff" opacity=".55" filter="url(#bl6)"/>
  <path d="M1945 394L2032 408" stroke="#e8f7ff" stroke-width="4" filter="url(#bl2)"/>
  <circle cx="2028" cy="917" r="55" fill="url(#g2)" opacity=".6"/>
  <!-- upper pane -->
  <path d="M1950 414L2031 408L2030 653H1950z" fill="#0a80e2"/>
  <path d="M1950 486L2030 497L2030 538L1950 532z" fill="#5cb5f1"/>
  <path d="M1950 532L2030 538L2030 653H1950z" fill="#a6d8f8"/>
  <path d="M1950 487L2030 498" stroke="#a8dcfa" stroke-width="3" filter="url(#bl2)"/>
  <path d="M1950 534L2030 540" stroke="#eef9ff" stroke-width="5" filter="url(#bl2)"/>
  <path d="M1950 414L2031 408L2030 653H1950z" fill="url(#edgeL)"/>
  <!-- lower pane -->
  <path d="M1950 671H2029L2028 917L1950 911z" fill="#0a86e6"/>
  <path d="M1950 671H2029L2028 832L1950 839z" fill="#62b8f2"/>
  <path d="M1950 671H2029L2028 787L1950 795z" fill="#a8dbf9"/>
  <path d="M1950 795L2028 787" stroke="#eef9ff" stroke-width="5" filter="url(#bl2)"/>
  <path d="M1950 671H2029L2028 917L1950 911z" fill="url(#edgeL)"/>
  <!-- bright right edges -->
  <path d="M2030.5 408V653M2028.5 671V917" stroke="#d4f0ff" stroke-width="2.2"/>
  <path d="M2030.5 408V653M2028.5 671V917" stroke="#6cc0ff" stroke-width="6" opacity=".5" filter="url(#bl2)"/>
  <path d="M1950 912L2028 917" stroke="#d8f2ff" stroke-width="2" filter="url(#bl2)"/>
  <!-- floor glow -->
  <path d="M1945 915L2028 917L1945 965z" fill="#7cc4f6" opacity=".8" filter="url(#bl6)"/>
  <circle cx="2028" cy="917" r="5" fill="#fff" filter="url(#bl2)"/>
  <circle cx="2032" cy="408" r="4" fill="#fff" filter="url(#bl2)"/>
</svg>
</div>

<!-- DESKTOP ICONS -->
<div id="icons">
  <!-- This PC -->
  <svg style="left:0;top:0" width="90" height="62" viewBox="0 0 90 62">
    <defs><linearGradient id="scr" x1="32" y1="12" x2="66" y2="46" gradientUnits="userSpaceOnUse"><stop offset="0" stop-color="#4cbaf9"/><stop offset=".5" stop-color="#36a8f5"/><stop offset=".5" stop-color="#2a9ef2"/><stop offset="1" stop-color="#1e94ee"/></linearGradient></defs>
    <path d="M31.6 10.6L68.3 21.6V46.6L31.6 34.1z" fill="#c9d2da"/>
    <path d="M32.4 11.8L66 22.5V44.8L32.4 33.4z" fill="url(#scr)"/>
    <path d="M66 22.3l2.3.7V46.6L66 45.6z" fill="#98a3ad"/>
    <path d="M40.1 44.4L49.7 41.5L62.5 46.5L55.4 49.7z" fill="#dfe4e8"/>
    <path d="M17.4 49L29.8 44.7L58.2 53.9L45.4 58.9z" fill="#e3e7eb"/>
    <path d="M21 48.5L50 57.5M24 46.8L54 55.6M26 50.2l12-4M31 51.8l12-4M36 53.4l12-4M41 55l12-4" stroke="#b8c0c7" stroke-width=".6"/>
  </svg>
  <div class="t ico-lbl" style="left:0;top:68px;width:87px">This PC</div>
  <!-- Recycle Bin -->
  <svg style="left:0;top:115px" width="90" height="70" viewBox="0 115 90 70">
    <path d="M20.6 134.2L41.2 128.1L65.7 135.6L60.4 172.5L45.5 177.5L25.6 171.1z" fill="#a9b0b7"/>
    <path d="M20.6 134.2L45.5 142L45.5 177.5L25.6 171.1z" fill="#b9bfc5"/>
    <path d="M45.5 142L65.7 135.6L60.4 172.5L45.5 177.5z" fill="#a3aab1"/>
    <path d="M20.6 134.2L41.2 128.1L65.7 135.6L45.5 142z" fill="#7f8890" stroke="#d5dadf" stroke-width="1"/>
    <path d="M24 164l21.5 6v7.5L25.6 171.1z" fill="#d3d8dc"/>
    <path d="M45.5 170l15.6-5L60.4 172.5L45.5 177.5z" fill="#c5cbd0"/>
    <g fill="#1b8ae8"><path d="M31 147.5q3-2 6-.5l2.5 3.5-3 1.5-2-2.5q-1.5-.5-3 .5z"/><path d="M27 152q-1 3 .5 5.5l3.5 2.5 1-3-2.5-2q-.5-1.5 0-3z"/><path d="M35 160.5q3 .5 5-1.5l1.5-3.5-3.5-.5-1 2.5q-1 1-2.5 1z"/></g>
  </svg>
  <div class="t ico-lbl" style="left:0;top:187px;width:87px">Recycle Bin</div>
  <!-- Control Panel -->
  <svg style="left:0;top:240px" width="90" height="60" viewBox="0 240 90 60">
    <defs><linearGradient id="cpg" x1="0" x2="1" y1="0" y2="0"><stop offset="0" stop-color="#b3e1fb"/><stop offset="1" stop-color="#72c2f5"/></linearGradient></defs>
    <rect x="18.5" y="254.5" width="49" height="34.5" fill="#2d93e0"/>
    <rect x="20.5" y="256.5" width="45" height="30.5" fill="url(#cpg)"/>
    <circle cx="32.6" cy="269" r="8.4" fill="#e8f6ff"/>
    <circle cx="32.6" cy="269" r="7.2" fill="#3d9ee8"/>
    <path d="M32.6 269V261.8A7.2 7.2 0 0 1 39.8 269z" fill="#f7a81b"/>
    <path d="M40 270h4.5v-8.6h8" stroke="#2a86d6" stroke-width="1" fill="none"/>
    <rect x="52.5" y="259.3" width="10.7" height="4.5" fill="#c9eaff" stroke="#2a86d6" stroke-width=".8"/>
    <rect x="52.5" y="266.8" width="10.7" height="4.5" fill="#c9eaff" stroke="#2a86d6" stroke-width=".8"/>
    <rect x="52.5" y="273.8" width="10.7" height="4.5" fill="#c9eaff" stroke="#2a86d6" stroke-width=".8"/>
    <path d="M24.5 283h14.5" stroke="#e9a93a" stroke-width="1.6"/><path d="M43.5 283h17.5" stroke="#2a86d6" stroke-width="1.2"/>
    <circle cx="41.8" cy="282.8" r="2" fill="#1f6fc0" stroke="#e8f6ff" stroke-width="1"/>
  </svg>
  <div class="t ico-lbl" style="left:0;top:306px;width:87px">Control Panel</div>
</div>

<!-- EXPLORER WINDOW -->
<div id="win" style="left:483px;top:244px;width:1475px;height:748px;background:#fff;border:1px solid #1b7fd4">
</div>
<div id="wc" style="left:0;top:0;width:2280px;height:1268px">
  <!-- title bar -->
  <div style="left:483px;top:244px;width:1475px;height:36px;background:#0078d7"></div>
  <!-- file tab -->
  <div style="left:483px;top:280px;width:68px;height:27px;background:#1979ca"></div>
  <div style="left:484px;top:307px;width:1473px;height:1px;background:#dadbdc"></div>
  <!-- QAT icons -->
  <svg style="left:494px;top:250px" width="20" height="22" viewBox="0 0 20 22"><path d="M7 2h6v9h5l-8 9-8-9h5z" fill="#3d9be9" opacity=".85"/></svg>
  <div style="left:521px;top:254px;width:2px;height:16px;border-left:1px solid #5aa8ea;border-right:1px solid #2a88dc"></div>
  <svg style="left:535px;top:252px" width="16" height="21" viewBox="0 0 16 21"><path d="M1.5 1.5h9l4 4v14h-13z" fill="#fdfdfd" stroke="#d8d8d8"/><path d="M4 11l3 3 5-6" stroke="#e8652a" stroke-width="2" fill="none"/></svg>
  <svg style="left:561px;top:252px" width="18" height="21" viewBox="0 0 18 21"><path d="M1 1h13v20H1z" fill="#fcd56b"/><path d="M14 12h3v9h-3z" fill="#e9b83c"/><path d="M1 1h13v3H1z" fill="#fde7a0"/></svg>
  <svg style="left:585px;top:257px" width="12" height="12" viewBox="0 0 12 12"><path d="M1 2h10" stroke="#000" stroke-width="1.2"/><path d="M1 5h10l-5 5z" fill="#000"/></svg>
  <div style="left:604px;top:254px;width:2px;height:16px;border-left:1px solid #5aa8ea;border-right:1px solid #2a88dc"></div>
  <!-- contextual tab -->
  <div style="left:757px;top:249px;width:169px;height:31px;background:#fbc8de"></div>
  <div class="t s13" style="left:766px;top:259px;color:#6a5865;letter-spacing:.15px">Compressed Folder Tools</div>
  <div class="t" style="left:942px;top:256px;color:#fff;letter-spacing:.2px">C:\Users\MVTools\Downloads</div>
  <!-- window controls -->
  <div style="left:1815px;top:261px;width:12px;height:1px;background:#fff"></div>
  <div style="left:1868px;top:256px;width:12px;height:12px;border:1px solid #fff"></div>
  <svg style="left:1922px;top:255px" width="14" height="14" viewBox="0 0 14 14"><path d="M1 1L13 13M13 1L1 13" stroke="#fff" stroke-width="1.1"/></svg>
  <!-- ribbon tabs -->
  <div class="t s13" style="left:508px;top:288px;color:#fff">File</div>
  <div class="t s13" style="left:568px;top:288px;color:#444">Home</div>
  <div class="t s13" style="left:638px;top:288px;color:#444">Share</div>
  <div class="t s13" style="left:707px;top:288px;color:#444">View</div>
  <div style="left:757px;top:280px;width:1px;height:22px;background:#e3e3e3"></div>
  <div style="left:926px;top:280px;width:1px;height:22px;background:#e3e3e3"></div>
  <div class="t s13" style="left:820px;top:288px;color:#444">Extract</div>
  <svg style="left:1911px;top:289px" width="12" height="8" viewBox="0 0 12 8"><path d="M1 1.5l5 5 5-5" stroke="#9a9a9a" stroke-width="1.1" fill="none"/></svg>
  <div style="left:1935px;top:285px;width:17px;height:17px;border-radius:50%;background:#1a6fcf"></div>
  <div class="t" style="left:1939px;top:287px;color:#fff;font-weight:bold;font-size:13px;line-height:13px">?</div>
  <!-- nav buttons -->
  <svg style="left:499px;top:321px" width="17" height="15" viewBox="0 0 17 15"><path d="M16 7.5H2M8 1.5l-6 6 6 6" stroke="#c7c7c7" stroke-width="1.3" fill="none"/></svg>
  <svg style="left:534px;top:321px" width="17" height="15" viewBox="0 0 17 15"><path d="M1 7.5h14M9 1.5l6 6-6 6" stroke="#c7c7c7" stroke-width="1.3" fill="none"/></svg>
  <svg style="left:565px;top:325px" width="10" height="7" viewBox="0 0 10 7"><path d="M1 1l4 4 4-4" stroke="#cdcdcd" stroke-width="1.1" fill="none"/></svg>
  <svg style="left:587px;top:320px" width="16" height="17" viewBox="0 0 16 17"><path d="M8 16V2M2 8l6-6 6 6" stroke="#5c5c5c" stroke-width="1.4" fill="none"/></svg>
  <!-- address box -->
  <div style="left:611px;top:316px;width:1076px;height:26px;border:1px solid #d9d9d9"></div>
  <div style="left:1662px;top:317px;width:1px;height:24px;background:#e3e3e3"></div>
  <svg style="left:613px;top:317px" width="22" height="21" viewBox="0 0 22 21"><path d="M8 1h6v9h6l-9 10-9-10h6z" fill="#2f8ce0"/></svg>
  <svg style="left:641px;top:326px" width="7" height="8" viewBox="0 0 7 8"><path d="M1.5 1l3.5 3-3.5 3" stroke="#6a6a6a" stroke-width="1.2" fill="none"/></svg>
  <div class="t" style="left:658px;top:322px;color:#1e1e1e">This PC</div>
  <svg style="left:716px;top:326px" width="7" height="8" viewBox="0 0 7 8"><path d="M1.5 1l3.5 3-3.5 3" stroke="#6a6a6a" stroke-width="1.2" fill="none"/></svg>
  <div class="t" style="left:733px;top:322px;color:#1e1e1e">Local Disk (C:)</div>
  <svg style="left:833px;top:326px" width="7" height="8" viewBox="0 0 7 8"><path d="M1.5 1l3.5 3-3.5 3" stroke="#6a6a6a" stroke-width="1.2" fill="none"/></svg>
  <div class="t" style="left:850px;top:322px;color:#1e1e1e">Users</div>
  <svg style="left:894px;top:326px" width="7" height="8" viewBox="0 0 7 8"><path d="M1.5 1l3.5 3-3.5 3" stroke="#6a6a6a" stroke-width="1.2" fill="none"/></svg>
  <div class="t" style="left:911px;top:322px;color:#1e1e1e">MVTools</div>
  <svg style="left:976px;top:326px" width="7" height="8" viewBox="0 0 7 8"><path d="M1.5 1l3.5 3-3.5 3" stroke="#6a6a6a" stroke-width="1.2" fill="none"/></svg>
  <div class="t" style="left:993px;top:322px;color:#1e1e1e">Downloads</div>
  <svg style="left:1645px;top:325px" width="12" height="9" viewBox="0 0 12 9"><path d="M1.5 1.8l4.5 4.5 4.5-4.5" stroke="#7c7c7c" stroke-width="1.8" fill="none"/></svg>
  <svg style="left:1665px;top:319px" width="20" height="20" viewBox="1665 319 20 20"><path d="M1675.2 325.6A5 5 0 1 0 1679.4 327.4" stroke="#808080" stroke-width="1.6" fill="none"/><path d="M1671.2 323.6H1676.2V328.6" stroke="#808080" stroke-width="1.6" fill="none"/></svg>
  <!-- search -->
  <div style="left:1702px;top:317px;width:240px;height:25px;border:1px solid #d9d9d9"></div>
  <div class="t" style="left:1712px;top:322px;color:#6d6d6d">Search Downloads</div>
  <svg style="left:1917px;top:322px" width="16" height="16" viewBox="0 0 16 16"><circle cx="9.5" cy="6" r="4.2" stroke="#444" stroke-width="1.4" fill="none"/><path d="M6.5 9L1.5 14" stroke="#444" stroke-width="1.8"/></svg>
  <!-- nav pane -->
  <svg style="left:510px;top:372px" width="26" height="22" viewBox="510 372 26 22"><defs><linearGradient id="stg2" x1="0" y1="0" x2="1" y2="1"><stop offset="0" stop-color="#46b4fa"/><stop offset="1" stop-color="#1a7fd8"/></linearGradient></defs><path d="M527.6 375.8L528.3 381.1L533.4 382.7L528.6 384.9L528.6 390.2L525.0 386.4L520.0 388.1L522.5 383.4L519.4 379.2L524.6 380.1z" fill="url(#stg2)"/><path d="M522 376.5h4M520.5 378.5h3M516.5 385.5h3M515.5 387.5h3" stroke="#9fd3f7" stroke-width="1"/></svg>
  <div class="t" style="left:538px;top:376px;color:#1c2430">Quick access</div>
  <div style="left:738px;top:352px;width:1px;height:610px;background:#f0f0f0"></div>
  <!-- column headers -->
  <div class="t" style="left:760px;top:358px;color:#4c607a">Name</div>
  <svg style="left:903px;top:349px" width="11" height="7" viewBox="0 0 11 7"><path d="M1 6l4.5-4.5L10 6" stroke="#8a8a8a" stroke-width="1.1" fill="none"/></svg>
  <div style="left:1063px;top:350px;width:1px;height:29px;background:#e5e5e5"></div>
  <div class="t" style="left:1071px;top:358px;color:#4c607a">Date modified</div>
  <div style="left:1206px;top:350px;width:1px;height:29px;background:#e5e5e5"></div>
  <div class="t" style="left:1214px;top:358px;color:#4c607a">Type</div>
  <div style="left:1349px;top:350px;width:1px;height:29px;background:#e5e5e5"></div>
  <div class="t" style="left:1357px;top:358px;color:#4c607a">Size</div>
  <div style="left:1443px;top:350px;width:1px;height:29px;background:#e5e5e5"></div>
  <!-- file row -->
  <div style="left:756px;top:386px;width:685px;height:26px;background:#cce8ff;border:1px solid #99d1ff"></div>
  <svg style="left:762px;top:388px" width="17" height="15" viewBox="0 0 17 15"><path d="M1 1h6l1.5 2H16v11H1z" fill="#f5c84a"/><path d="M1 4h15v10H1z" fill="#fbd866"/><path d="M8 1h3v13H8z" fill="#8b8b8b"/><path d="M9 2h1v1H9zM9 4h1v1H9zM9 6h1v1H9zM9 8h1v1H9z" fill="#fff"/></svg>
  <div class="t" style="left:785px;top:392px;color:#000">mvtools.zip</div>
  <div class="t" style="left:1214px;top:392px;color:#6d6d6d">Compressed (zipp...</div>
  <div class="t" style="left:1369px;top:392px;color:#6d6d6d;letter-spacing:-.6px">155,086 KB</div>
  <!-- status bar -->
  <div class="t" style="left:501px;top:971px;color:#2e3440">1 item</div>
  <div style="left:552px;top:966px;width:1px;height:20px;background:#f7f7f7"></div>
  <div class="t" style="left:566px;top:971px;color:#2e3440;white-space:pre">1 item selected  151 MB</div>
  <div style="left:725px;top:966px;width:1px;height:20px;background:#f7f7f7"></div>
  <!-- view buttons -->
  <div style="left:1900px;top:964px;width:26px;height:27px;background:#cce8ff;border:1px solid #66b5f0"></div>
  <svg style="left:1904px;top:968px" width="18" height="18" viewBox="0 0 18 18"><rect x="1.5" y="2.5" width="3" height="3" fill="#fff" stroke="#9ab"/><rect x="1.5" y="7.5" width="3" height="3" fill="#fff" stroke="#9ab"/><rect x="1.5" y="12.5" width="3" height="3" fill="#fff" stroke="#d66"/><path d="M7 4h4M13 4h4M7 9h4M13 9h4M7 14h4M13 14h4" stroke="#555" stroke-width="1.2"/></svg>
  <svg style="left:1930px;top:969px" width="18" height="15" viewBox="0 0 18 15"><rect x=".5" y=".5" width="17" height="13" fill="#eee" stroke="#999"/><path d="M2 3h14v6H2z" fill="#6aa8e8"/><path d="M2 12V8l5-2 9 4v2z" fill="#2b4050"/></svg>
</div>

<!-- MAIN CONTEXT MENU -->
<div id="m1" class="menu" style="left:508px;top:402px;width:330px;height:503px"></div>
<div style="left:512px;top:494px;width:321px;height:25px;background:#dadada"></div>
<div class="t" style="left:550px;top:414px;font-weight:bold">Open</div>
<div class="t" style="left:550px;top:440px">Open in new window</div>
<div class="t" style="left:550px;top:474px">Extract All...</div>
<div class="t" style="left:550px;top:500px">7-Zip</div>
<div class="t" style="left:550px;top:526px">Pin to Start</div>
<div class="t" style="left:550px;top:552px">Scan with Windows Defender...</div>
<div class="t" style="left:550px;top:578px">Share</div>
<div class="t" style="left:550px;top:604px">Open with...</div>
<div class="t" style="left:550px;top:638px">Give access to</div>
<div class="t" style="left:550px;top:664px">Restore previous versions</div>
<div class="t" style="left:550px;top:698px">Send to</div>
<div class="t" style="left:550px;top:732px">Cut</div>
<div class="t" style="left:550px;top:758px">Copy</div>
<div class="t" style="left:550px;top:792px">Create shortcut</div>
<div class="t" style="left:550px;top:818px">Delete</div>
<div class="t" style="left:550px;top:844px">Rename</div>
<div class="t" style="left:550px;top:879px">Properties</div>
<div class="sep" style="left:522px;top:463px;width:302px"></div>
<div class="sep" style="left:522px;top:627px;width:302px"></div>
<div class="sep" style="left:522px;top:688px;width:302px"></div>
<div class="sep" style="left:522px;top:722px;width:302px"></div>
<div class="sep" style="left:522px;top:782px;width:302px"></div>
<div class="sep" style="left:522px;top:868px;width:302px"></div>
<svg style="left:813px;top:498px" width="11" height="16" viewBox="0 0 11 16"><path d="M2 1l7 7-7 7" stroke="#4b5875" stroke-width="1.1" fill="none"/></svg>
<svg style="left:813px;top:636px" width="11" height="16" viewBox="0 0 11 16"><path d="M2 1l7 7-7 7" stroke="#4b5875" stroke-width="1.1" fill="none"/></svg>
<svg style="left:813px;top:696px" width="11" height="16" viewBox="0 0 11 16"><path d="M2 1l7 7-7 7" stroke="#4b5875" stroke-width="1.1" fill="none"/></svg>
<svg style="left:521px;top:549px" width="20" height="19" viewBox="0 0 20 19"><rect width="20" height="19" fill="#1a73e8"/><path d="M3 3.5Q10 2 17 3.5V9q0 5.5-7 8.5Q3 14.5 3 9z" fill="#fff"/><path d="M10 3v14.5M3 9.5h14" stroke="#1a73e8" stroke-width="2"/></svg>
<svg style="left:521px;top:575px" width="18" height="17" viewBox="0 0 18 17"><path d="M1 5v11h13v-3" stroke="#333" stroke-width="1.2" fill="none"/><path d="M4 12q1-6 8-6V3l5 4.5-5 4.5V9q-5 0-8 3z" stroke="#333" stroke-width="1.1" fill="none"/></svg>

<!-- 7-ZIP SUBMENU -->
<div id="m2" class="menu" style="left:131px;top:490px;width:381px;height:350px"></div>
<div style="left:134px;top:574px;width:375px;height:26px;background:#dadada"></div>
<div class="t" style="left:172px;top:502px">Open archive</div>
<div class="t" style="left:172px;top:528px">Open archive</div>
<div class="t" style="left:172px;top:554px">Extract files...</div>
<div class="t" style="left:172px;top:580px">Extract Here</div>
<div class="t" style="left:172px;top:606px">Extract to "mvtools\"</div>
<div class="t" style="left:172px;top:632px">Test archive</div>
<div class="t" style="left:172px;top:658px">Add to archive...</div>
<div class="t" style="left:172px;top:684px">Compress and email...</div>
<div class="t" style="left:172px;top:710px">Add to "mvtools_2.7z"</div>
<div class="t" style="left:172px;top:736px">Compress to "mvtools_2.7z" and email</div>
<div class="t" style="left:172px;top:762px">Add to "mvtools_2.zip"</div>
<div class="t" style="left:172px;top:788px">Compress to "mvtools_2.zip" and email</div>
<div class="t" style="left:172px;top:814px">CRC SHA</div>
<svg style="left:488px;top:527px" width="11" height="16" viewBox="0 0 11 16"><path d="M2 1l7 7-7 7" stroke="#4b5875" stroke-width="1.1" fill="none"/></svg>
<svg style="left:488px;top:813px" width="11" height="16" viewBox="0 0 11 16"><path d="M2 1l7 7-7 7" stroke="#4b5875" stroke-width="1.1" fill="none"/></svg>
<div style="left:143px;top:570px;width:134px;height:36px;border:6px solid #ff0a00;border-radius:4px"></div>
<svg style="left:345px;top:592px" width="26" height="32" viewBox="345 592 26 32"><path d="M351.3 597.3V615.8L355.6 612L359.3 619.2L362.3 617.8L358.9 611H364.8z" fill="#fff" stroke="#3a3a3a" stroke-width="1.2" stroke-linejoin="round"/></svg>

<!-- TASKBAR -->
<div id="task" style="left:0;top:1225px;width:2280px;height:43px;background:#002242"></div>
<div style="left:59px;top:1225px;width:57px;height:43px;background:#004a8f"></div>
<svg style="left:16px;top:1238px" width="22" height="22" viewBox="0 0 22 22"><path d="M1 3.2L9.3 2v8.3H1zM10.5 1.8L21 .3v10H10.5zM1 11.5h8.3v8.3L1 18.7zM10.5 11.5H21v10l-10.5-1.5z" fill="#fff"/></svg>
<svg style="left:73px;top:1237px" width="28" height="23" viewBox="0 0 28 23"><path d="M1 1h8l2 2h16v19H1z" fill="#f7d97a"/><path d="M1 4h26v18H1z" fill="#fbe08e"/><path d="M6 12h15v10h-4v-5h-7v5H6z" fill="#30a8f2"/><path d="M10 17h7v5h-7z" fill="#f7d97a"/></svg>
<svg style="left:131px;top:1234px" width="30" height="30" viewBox="0 0 30 30">
  <circle cx="15" cy="15" r="14.5" fill="#db4437"/>
  <path d="M15 15L2.4 7.7A14.5 14.5 0 0 0 15 29.5z" fill="#0f9d58"/>
  <path d="M15 15h14.5A14.5 14.5 0 0 1 15 29.5z" fill="#ffcd40"/>
  <path d="M15 15L27.6 7.7A14.5 14.5 0 0 1 29.5 15z" fill="#ffcd40"/>
  <path d="M15 15L8 27.2A14.5 14.5 0 0 0 15 29.5L22.2 17z" fill="#ffcd40"/>
  <path d="M15 15L2.4 7.7L8.5 18.5z" fill="#0f9d58"/>
  <circle cx="15" cy="15" r="6.6" fill="#fff"/><circle cx="15" cy="15" r="5.2" fill="#4285f4"/>
</svg>
<svg style="left:2102px;top:1242px" width="17" height="11" viewBox="0 0 17 11"><path d="M1.5 9.5l7-7 7 7" stroke="#fff" stroke-width="1.3" fill="none"/></svg>
<svg style="left:2138px;top:1240px" width="22" height="18" viewBox="0 0 22 18"><rect x="5.5" y="1.5" width="15" height="11" fill="none" stroke="#fff" stroke-width="1.2"/><path d="M13 13v3M9 16.5h8M2 5v12.5" stroke="#fff" stroke-width="1.2"/><rect x="1" y="1.5" width="5" height="4" fill="#002242" stroke="#fff" stroke-width="1"/></svg>
<svg style="left:2176px;top:1239px" width="23" height="20" viewBox="0 0 23 20"><path d="M1.5 7h3l5-4.5v15l-5-4.5h-3z" fill="none" stroke="#fff" stroke-width="1.2"/><path d="M12.5 7.5q1.5 2.5 0 5M15.5 5q3 5 0 10M18.5 2.5q4.5 7.5 0 15" fill="none" stroke="#fff" stroke-width="1.2"/></svg>
<svg style="left:2236px;top:1238px" width="23" height="22" viewBox="0 0 23 22"><path d="M1.5 1.5h19v15h-7.5l-2 3-2-3h-7.5z" fill="none" stroke="#fff" stroke-width="1.2"/></svg>
</body></html>
